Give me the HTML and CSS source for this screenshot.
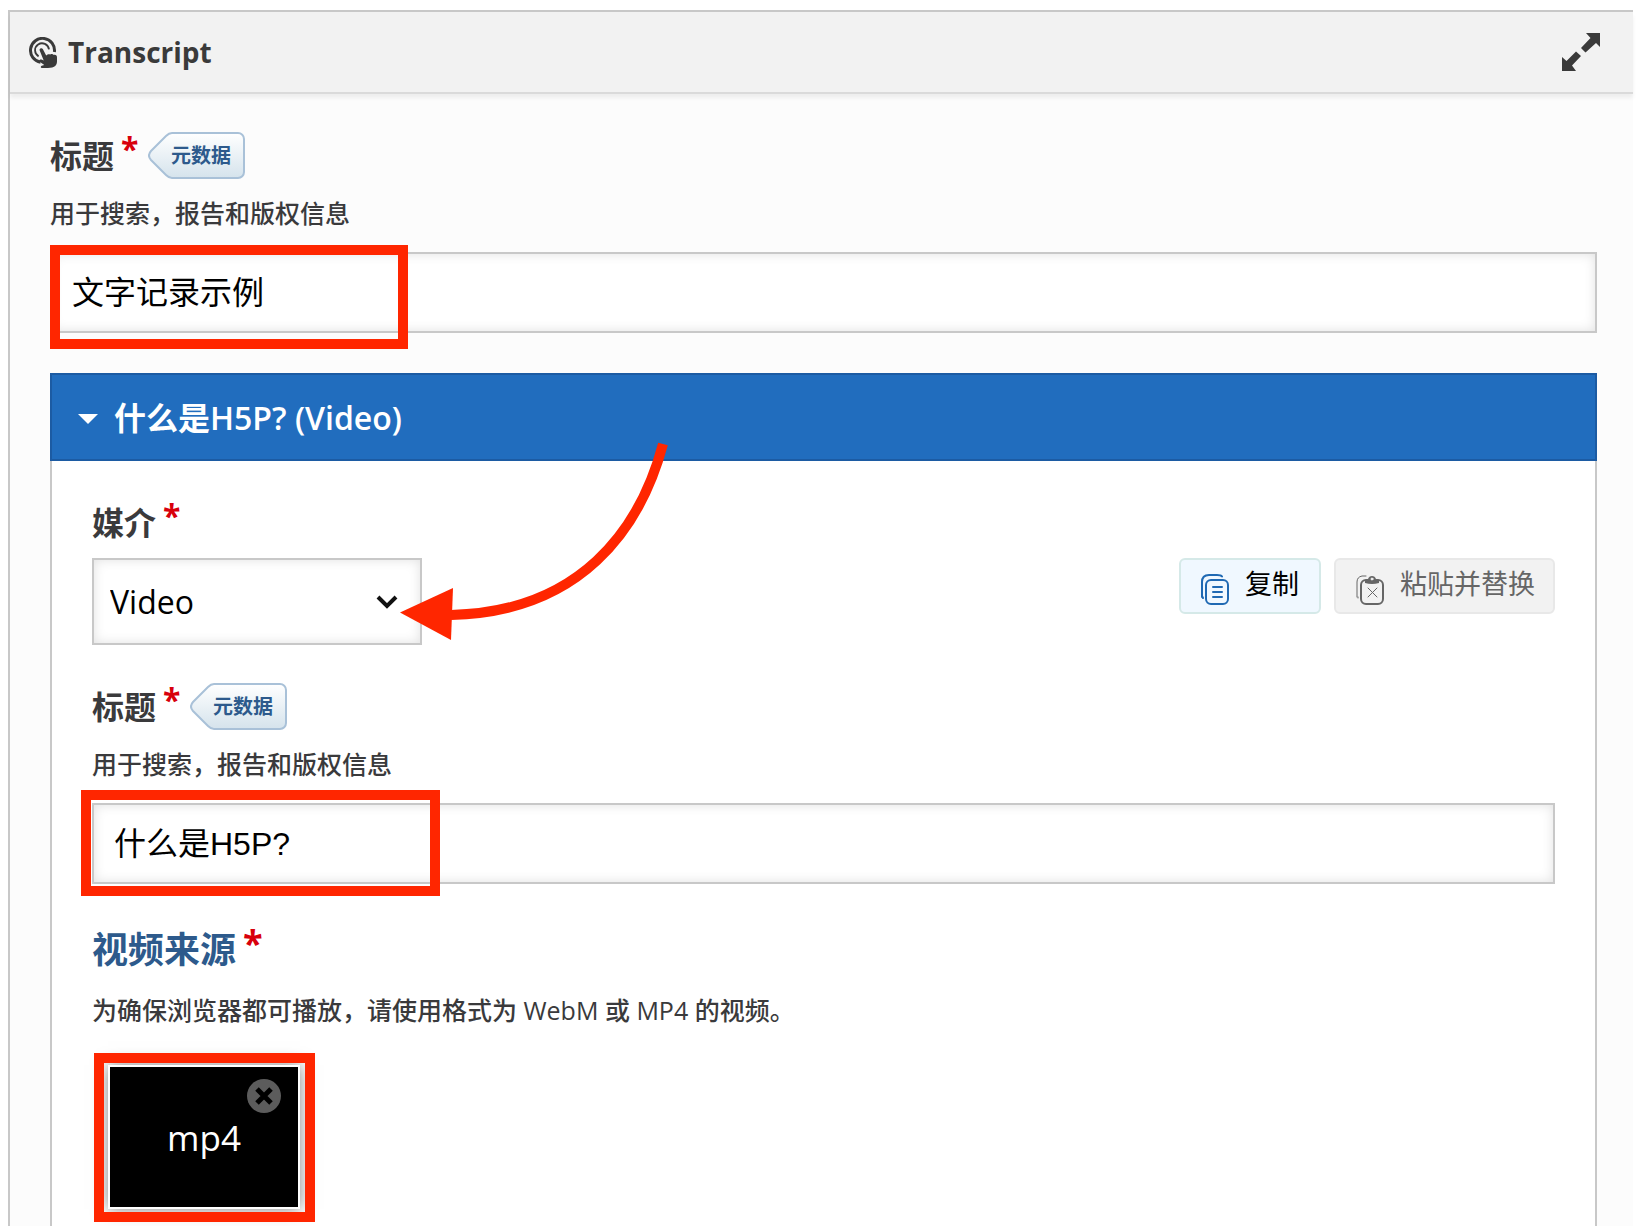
FILE: index.html
```
<!DOCTYPE html>
<html lang="zh-CN">
<head>
    <meta charset="UTF-8">
    <meta name="viewport" content="width=device-width, initial-scale=1.0">
    <title>Transcript</title>
    <link rel="stylesheet" href="styles.css">
</head>
<body>
    <main class="editor">
        <header class="editor-header">
            <h1 class="editor-title">
                <svg class="title-icon" viewBox="0 0 28 31" aria-hidden="true">
                    <path d="M11.500 25.200A12 12 0 1 1 25.400 15" fill="none" stroke="#3a3a3a" stroke-width="3"/>
                    <path d="M9.600 19.400A7 7 0 1 1 20 12.400" fill="none" stroke="#3a3a3a" stroke-width="1.800"/>
                    <path d="M10.6 13.2c-.5-1.7 2.3-2.7 3.2-1.2l3.4 6.4c1.6-1.6 3-1.4 4-.9 1.600-.9 3-.3 3.500.4 2.300-.5 3.300.8 3.300 2.500v4c0 2.600-1.200 4.300-3 5.300-3 1.400-7.500 1.400-12.400 1.200-1.300-.1-.9-1.800.1-2.100l2.600-.8-4.600-3.200c-1.400-1.200.3-2.900 1.900-2.200l2.100.8z" fill="#3a3a3a"/>
                </svg>
                Transcript
            </h1>
            <button type="button" class="fullscreen" aria-label="全屏">
                <svg viewBox="0 0 38 38" aria-hidden="true">
                    <path d="M24 0h14v14l-4-4-10.500 9.500-4.500-4.500 9.500-10z" fill="#3a3a3a"/>
                    <path d="M14 38H0V24l4.500 4L14 18.500l5 4.500-9 9.500z" fill="#3a3a3a"/>
                </svg>
            </button>
        </header>

        <form class="editor-body">
            <!-- Main title -->
            <div class="field-label">
                <label for="title">标题<span class="required">*</span></label>
                <button type="button" class="metadata">
                    <svg viewBox="0 0 97 47" aria-hidden="true">
                        <path d="M24 1h66a6 6 0 0 1 6 6v33a6 6 0 0 1-6 6H24q-3 0-6-3L3 28q-4-4.500 0-9L18 4q3-3 6-3z"/>
                    </svg>
                    <span>元数据</span>
                </button>
            </div>
            <p class="description">用于搜索，报告和版权信息</p>
            <div class="field-input">
                <input type="text" id="title" class="text-input" value="文字记录示例">
                <span class="highlight highlight-title"></span>
            </div>

            <!-- Media group -->
            <section class="group">
                <button type="button" class="group-title"><span class="caret"></span>什么是H5P? (Video)</button>
                <svg class="arrow" viewBox="0 0 270 200" aria-hidden="true">
                    <path d="M265 4C242 90 182 172 53 175" fill="none" stroke="#ff2600" stroke-width="10"/>
                    <path d="M2 172.500L55 148l-2 52z" fill="#ff2600"/>
                </svg>

                <div class="group-body">
                    <div class="field-label">
                        <label for="media">媒介<span class="required">*</span></label>
                    </div>
                    <div class="library">
                        <div class="select-box">
                            <select id="media">
                                <option>Video</option>
                            </select>
                            <svg class="chevron" viewBox="0 0 22 14" aria-hidden="true">
                                <path d="M2 2l9 9 9-9" fill="none" stroke="#111" stroke-width="4"/>
                            </svg>
                        </div>
                        <div class="actions">
                            <button type="button" class="action copy">
                                <svg viewBox="0 0 28 32" fill="none" stroke="#1f69b3" stroke-width="2" stroke-linecap="round" aria-hidden="true">
                                    <rect x="5" y="6" width="22" height="24" rx="5"/>
                                    <path d="M1 23V8q0-7 7-7h8q4 0 5 1.500M1 22l1 2M12 13h9M12 18h9M12 23h9"/>
                                </svg>
                                <span>复制</span>
                            </button>
                            <button type="button" class="action paste" disabled>
                                <svg viewBox="0 0 28 32" fill="none" stroke="#666" stroke-width="2" stroke-linecap="round" aria-hidden="true">
                                    <rect x="5" y="6" width="22" height="24" rx="5"/>
                                    <path d="M1 23V8q0-5 5-6h4M2 23v1" stroke-width="1"/>
                                    <path d="M12 14l9 9M21 14l-9 9" stroke-width="1"/>
                                    <path d="M9 7q0-2 3-2 1-3 4-3t4 3q3 0 3 2v2q-7 2-14 0z" fill="#666" stroke="none"/>
                                    <circle cx="16" cy="5" r="1" fill="#f2f2f2" stroke="#f2f2f2" stroke-width="1"/>
                                </svg>
                                <span>粘贴并替换</span>
                            </button>
                        </div>
                    </div>

                    <div class="field-label video-title">
                        <label for="video-title">标题<span class="required">*</span></label>
                        <button type="button" class="metadata">
                            <svg viewBox="0 0 97 47" aria-hidden="true">
                                <path d="M24 1h66a6 6 0 0 1 6 6v33a6 6 0 0 1-6 6H24q-3 0-6-3L3 28q-4-4.500 0-9L18 4q3-3 6-3z"/>
                            </svg>
                            <span>元数据</span>
                        </button>
                    </div>
                    <p class="description">用于搜索，报告和版权信息</p>
                    <div class="field-input">
                        <input type="text" id="video-title" class="text-input" value="什么是H5P?">
                        <span class="highlight highlight-video"></span>
                    </div>

                    <h2 class="sources-title">视频来源<span class="required">*</span></h2>
                    <p class="description">为确保浏览器都可播放，请使用格式为 WebM 或 MP4 的视频。</p>
                    <div class="thumbnail">
                        mp4
                        <button type="button" class="remove" aria-label="删除">
                            <svg viewBox="0 0 34 34" aria-hidden="true">
                                <circle cx="17" cy="17" r="17" fill="#5c5c5c"/>
                                <path d="M10 10l14 14M24 10L10 24" stroke="#000" stroke-width="5"/>
                            </svg>
                        </button>
                        <span class="highlight highlight-thumbnail"></span>
                    </div>
                </div>
            </section>
        </form>
    </main>

    <svg width="0" height="0" class="defs" aria-hidden="true">
        <defs>
            <linearGradient id="tag" x1="0" y1="0" x2="0" y2="1">
                <stop offset="0" stop-color="#ffffff"/>
                <stop offset="1" stop-color="#d5e3ec"/>
            </linearGradient>
        </defs>
    </svg>
</body>
</html>
```
FILE: styles.css
```
* {
    box-sizing: border-box;
}

body {
    margin: 0;
    min-height: 100vh;
    display: flex;
    flex-direction: column;
    padding: 10px 11px 0 8px;
    background-color: #fff;
    color: #3a3a3c;
    font-family: "Open Sans", "Noto Sans CJK SC", sans-serif;
    font-size: 32px;
}

h1, h2, p {
    margin: 0;
}

button {
    font-family: inherit;
    cursor: pointer;
}

svg {
    display: block;
}

.defs {
    position: absolute;
}

.editor {
    flex: 1;
    display: flex;
    flex-direction: column;
    border: 2px solid #c8c8c8;
    border-width: 2px 0 0 2px;
    background-color: #fcfcfc;
}

/* Header */
.editor-header {
    display: flex;
    align-items: center;
    justify-content: space-between;
    height: 82px;
    padding: 0 33px 0 19px;
    background-color: #f2f2f2;
    border-bottom: 2px solid #dadada;
    box-shadow: 0 4px 4px rgba(0, 0, 0, 0.06);
}

.editor-title {
    display: flex;
    align-items: center;
    gap: 11px;
    font-size: 28px;
    line-height: 40px;
    color: #3a3a3a;
}

.title-icon {
    width: 28px;
    height: 31px;
}

.fullscreen {
    width: 38px;
    height: 38px;
    padding: 0;
    border: none;
    background: none;
}

/* Fields */
.editor-body {
    flex: 1;
    display: flex;
    flex-direction: column;
    padding: 38px 36px 0 40px;
}

.field-label {
    display: flex;
    align-items: flex-start;
    gap: 10px;
    height: 48px;
    font-weight: bold;
    line-height: 48px;
}

.required {
    margin-left: 7px;
    color: #d8000c;
    font-weight: bold;
    line-height: 1;
    vertical-align: 7px;
}

.metadata {
    position: relative;
    width: 97px;
    height: 47px;
    padding: 0 0 2px 8px;
    border: none;
    background: none;
    color: #2d5a8c;
    font-size: 20px;
    font-weight: bold;
}

.metadata svg {
    position: absolute;
    inset: 0;
    fill: url(#tag);
    stroke: #a9c1d8;
    stroke-width: 2;
}

.metadata span {
    position: relative;
}

.description {
    margin: 17px 0 23px;
    font-size: 25px;
    font-weight: 500;
    line-height: 32px;
}

.field-input {
    position: relative;
}

.text-input {
    display: block;
    width: 100%;
    height: 81px;
    padding: 0 20px 5px;
    border: 2px solid #c8c8c8;
    border-radius: 0;
    background-color: #fff;
    box-shadow: inset 0 0 12px rgba(0, 0, 0, 0.12);
    color: #000;
    font-family: "Liberation Sans", "Noto Sans CJK SC", sans-serif;
    font-size: 32px;
}

/* Group */
.group {
    position: relative;
    flex: 1;
    display: flex;
    flex-direction: column;
    margin-top: 40px;
}

.group-title {
    display: flex;
    align-items: center;
    gap: 16px;
    height: 88px;
    padding: 0 26px 3px;
    border: 2px solid #1c5ba3;
    background-color: #216dbe;
    color: #fff;
    font-size: 32px;
    font-weight: 600;
}

.caret {
    margin-top: 6px;
    border: 10px solid transparent;
    border-top-color: #fff;
    border-bottom: none;
}

.group-body {
    flex: 1;
    padding: 38px 40px 12px;
    border: 2px solid #c8c8c8;
    border-width: 0 2px;
    background-color: #fff;
}

.library {
    display: flex;
    align-items: flex-start;
    justify-content: space-between;
    margin-top: 11px;
}

.select-box {
    position: relative;
}

.select-box select {
    display: block;
    width: 330px;
    height: 87px;
    padding: 0 16px;
    border: 2px solid #c8c8c8;
    border-radius: 0;
    appearance: none;
    background-color: #fff;
    box-shadow: inset 0 0 12px rgba(0, 0, 0, 0.12);
    color: #000;
    font-family: inherit;
    font-size: 32px;
}

.chevron {
    position: absolute;
    top: 37px;
    right: 24px;
    width: 22px;
    height: 14px;
    pointer-events: none;
}

.actions {
    display: flex;
    gap: 13px;
}

.action {
    display: flex;
    align-items: center;
    gap: 16px;
    height: 56px;
    padding: 0 20px;
    border: 2px solid #d5e9e8;
    border-radius: 6px;
    background-color: #f0f8ff;
    color: #000;
    font-size: 27px;
    line-height: 40px;
}

.action svg {
    width: 28px;
    height: 32px;
    margin-top: 7px;
}

.action span {
    margin-bottom: 4px;
}

.paste {
    padding: 0 18px 0 20px;
    border-color: #e8e8e8;
    background-color: #f2f2f2;
    color: #666;
}

.video-title {
    margin-top: 38px;
}

.sources-title {
    margin: 41px 0 20px;
    color: #2d5a8c;
    font-size: 36px;
    line-height: 48px;
}

/* Video thumbnail */
.thumbnail {
    position: relative;
    display: flex;
    align-items: center;
    justify-content: center;
    width: 192px;
    height: 144px;
    margin: 39px 0 0 16px;
    border: 2px solid #fff;
    background-color: #000;
    box-shadow: 0 0 16px rgba(0, 0, 0, 0.5);
    color: #fff;
    font-size: 35px;
}

.remove {
    position: absolute;
    top: 12px;
    right: 17px;
    width: 34px;
    height: 34px;
    padding: 0;
    border: none;
    background: none;
}

/* Annotations */
.highlight {
    position: absolute;
    border: 10px solid #ff2600;
    pointer-events: none;
}

.highlight-title {
    top: -7px;
    left: 0;
    width: 358px;
    height: 104px;
}

.highlight-video {
    top: -13px;
    left: -11px;
    width: 359px;
    height: 106px;
}

.highlight-thumbnail {
    top: -14px;
    left: -16px;
    width: 221px;
    height: 169px;
}

.arrow {
    position: absolute;
    z-index: 1;
    top: 67px;
    left: 348px;
    width: 270px;
    height: 200px;
    overflow: visible;
    pointer-events: none;
}
```
